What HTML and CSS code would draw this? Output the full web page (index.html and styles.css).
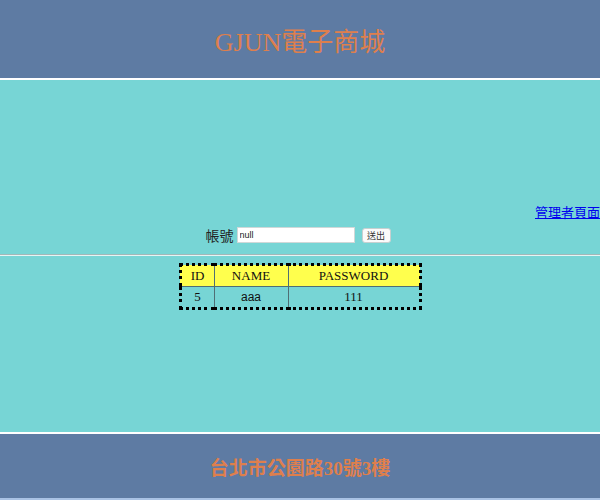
FILE: index.html
```html
<!DOCTYPE html>
<html lang="zh-Hant">
<head>
<meta charset="utf-8">
<title>GJUN電子商城</title>
<link rel="stylesheet" href="styles.css">
</head>
<body>
<div class="page">
  <header class="top">
    <h1 class="title">GJUN電子商城</h1>
  </header>
  <main class="content">
    <div class="admin-row"><a class="admin-link" href="#">管理者頁面</a></div>
    <form class="login">
      <label class="login-label" for="acc">帳號</label>
      <input class="login-input" id="acc" type="text" value="null">
      <button class="login-btn" type="button">送出</button>
    </form>
    <hr class="divider">
    <table class="data">
      <tr class="head-row"><th class="c-id">ID</th><th class="c-name">NAME</th><th class="c-pw">PASSWORD</th></tr>
      <tr><td>5</td><td class="name-cell">aaa</td><td>111</td></tr>
    </table>
  </main>
  <footer class="bottom">
    <p class="address">台北市公園路30號3樓</p>
  </footer>
</div>
</body>
</html>
```
FILE: styles.css
```css
html, body {
  margin: 0;
  padding: 0;
}
body {
  font-family: "Liberation Serif", "Noto Sans CJK TC", serif;
  background: #5e7ba3;
}
.page {
  display: flex;
  flex-direction: column;
  height: 500px;
  width: 600px;
  overflow: hidden;
}
.top {
  height: 78px;
  background: #5e7ba3;
  border-bottom: 2px solid #ffffff;
  display: flex;
  align-items: center;
  justify-content: center;
}
.title {
  margin: 0;
  font-size: 26px;
  font-weight: normal;
  color: #de7f4d;
}
.content {
  flex: 1;
  background: #77d5d5;
  padding-top: 125px;
  display: flex;
  flex-direction: column;
}
.admin-row {
  text-align: right;
  font-size: 13px;
  line-height: 16px;
}
.admin-link {
  color: #0000ee;
  text-decoration: underline;
}
.login {
  margin: 5px 0 0 0;
  display: flex;
  align-items: center;
  justify-content: center;
  height: 18px;
  padding-right: 4px;
}
.login-label {
  font-size: 14px;
  color: #222;
  margin-right: 3px;
}
.login-input {
  width: 112px;
  height: 14px;
  padding: 0 2px;
  border: 1px solid #d0d8d8;
  background: #fff;
  font-family: "Liberation Sans", "Noto Sans CJK TC", sans-serif;
  font-size: 9px;
  color: #222;
  margin: 0 7px 0 0;
}
.login-btn {
  width: 29px;
  height: 15px;
  padding: 0;
  border: 1px solid #c8d0d0;
  border-radius: 3px;
  background: #fbfbfb;
  font-family: "Noto Sans CJK TC", sans-serif;
  font-size: 9px;
  line-height: 13px;
  color: #333;
}
.divider {
  margin: 10px 0 0 0;
  border: 0;
  border-top: 1px solid #a3b8b8;
  border-bottom: 1px solid #e6f4f4;
  height: 0;
}
.data {
  margin: 7px auto 0;
  border: 3px dotted #000;
  border-collapse: collapse;
  font-size: 13px;
  color: #111;
}
.data th, .data td {
  font-weight: normal;
  text-align: center;
  border: 1px solid #4f6f75;
  height: 20px;
  padding: 0;
}
.head-row {
  background: #ffff4d;
}
.c-id { width: 32px; }
.c-name { width: 73px; }
.c-pw { width: 130px; }
.name-cell {
  font-family: "Liberation Sans", sans-serif;
  font-size: 12px;
}
.bottom {
  height: 64px;
  background: #5e7ba3;
  border-top: 2px solid #ffffff;
  border-bottom: 2px solid #a9c2e4;
  display: flex;
  align-items: center;
  justify-content: center;
}
.address {
  margin: 0;
  font-size: 19px;
  font-weight: bold;
  color: #de7f4d;
}
```
